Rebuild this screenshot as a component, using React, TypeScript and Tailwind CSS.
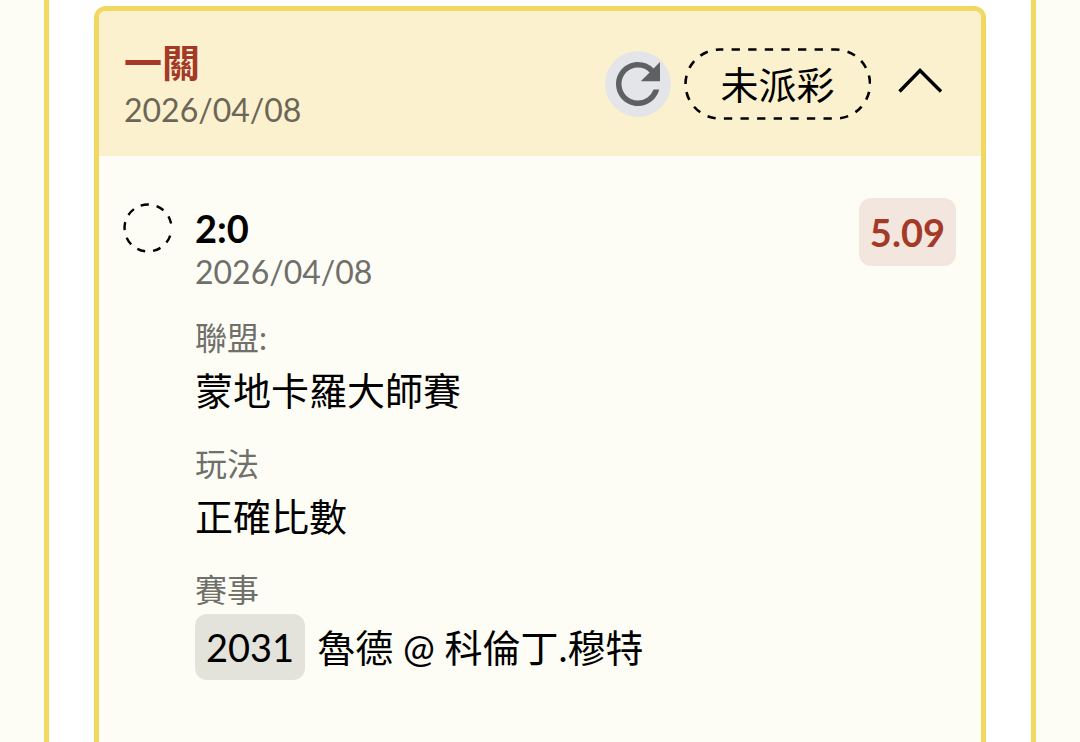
import { useState } from "react";
import { MdRefresh } from "react-icons/md";

interface BetDetail {
  label: string;
  value: string;
  code?: string;
}

const details: BetDetail[] = [
  { label: "聯盟:", value: "蒙地卡羅大師賽" },
  { label: "玩法", value: "正確比數" },
  { label: "賽事", value: "魯德 @ 科倫丁.穆特", code: "2031" },
];

function StatusPill({ text }: { text: string }) {
  return (
    <div className="relative flex h-[72px] w-[187px] items-center justify-center text-[38px] leading-[56px] text-black">
      <svg
        className="absolute inset-0 h-full w-full"
        viewBox="0 0 187 72"
        fill="none"
        aria-hidden="true"
      >
        <rect
          x="1.5"
          y="1.5"
          width="184.5"
          height="69"
          rx="34.5"
          stroke="black"
          strokeWidth="2.6"
          strokeDasharray="8.3 8.3"
          strokeDashoffset="5"
        />
      </svg>
      <span className="relative">{text}</span>
    </div>
  );
}

function PendingIcon() {
  return (
    <svg
      className="mt-[5px] h-[50px] w-[50px] shrink-0"
      viewBox="-25 -25 50 50"
      fill="none"
      aria-hidden="true"
    >
      <path
        d="M22.2 7.65A23.5 23.5 0 1 1 23.07 -4.48"
        stroke="black"
        strokeWidth="2.4"
        strokeDasharray="8 7.9"
      />
    </svg>
  );
}

export default function App() {
  const [open, setOpen] = useState(true);

  return (
    <div
      lang="zh-Hant"
      className="flex min-h-screen flex-col bg-[#fefdf5] px-11 font-['Lato','Noto_Sans_CJK_TC',sans-serif]"
    >
      <main className="flex flex-1 flex-col border-x-5 border-[#f0d861] bg-white px-[45px] pt-1.5">
        <article className="flex flex-1 flex-col rounded-t-xl border-5 border-b-0 border-[#f0d861] bg-[#fefdf5]">
          <header className="flex items-center justify-between rounded-t-md bg-[#fcf1ce] px-[25px] py-[22px]">
            <div className="pt-[5px]">
              <h1 className="text-[38px] leading-[48px] font-bold text-[#a33a28]">
                一關
              </h1>
              <p className="text-[32px] leading-[48px] text-[#6b6657]">
                2026/04/08
              </p>
            </div>
            <div className="flex items-center gap-[13px]">
              <button
                type="button"
                aria-label="重新整理"
                className="rounded-full bg-[#e4e5e8] text-[#5f6062]"
              >
                <MdRefresh size={66} />
              </button>
              <StatusPill text="未派彩" />
              <button
                type="button"
                aria-label="展開或收合"
                aria-expanded={open}
                onClick={() => setOpen(!open)}
              >
                <svg
                  className={`h-[72px] w-[72px] ${open ? "" : "rotate-180"}`}
                  viewBox="0 0 72 72"
                  fill="none"
                  stroke="black"
                  strokeWidth="3.4"
                >
                  <path d="M15.5 43.5L36 22.5L57 43.5" />
                </svg>
              </button>
            </div>
          </header>

          {open && (
            <section className="flex items-start gap-[22px] pt-[42px] pr-[25px] pb-10 pl-6">
              <PendingIcon />
              <div className="min-w-0 flex-1 pt-2">
                <h2 className="text-[38px] leading-[44px] font-bold text-black">
                  2:0
                </h2>
                <p className="text-[32px] leading-[44px] text-[#6f6f6b]">
                  2026/04/08
                </p>
                <dl className="mt-5 flex flex-col gap-[22px]">
                  {details.map((item) => (
                    <div key={item.label}>
                      <dt className="text-[32px] leading-[48px] text-[#6f6f6b]">
                        {item.label}
                      </dt>
                      <dd className="flex items-center gap-3 text-[38px] leading-[56px] text-black">
                        {item.code && (
                          <span className="rounded-xl bg-[#e3e2db] px-[11px] py-[5px]">
                            {item.code}
                          </span>
                        )}
                        <span>{item.value}</span>
                      </dd>
                    </div>
                  ))}
                </dl>
              </div>
              <span className="rounded-xl bg-[#f3e6df] px-[11px] py-1.5 text-[38px] leading-[56px] font-bold text-[#a33a28]">
                5.09
              </span>
            </section>
          )}
        </article>
      </main>
    </div>
  );
}
